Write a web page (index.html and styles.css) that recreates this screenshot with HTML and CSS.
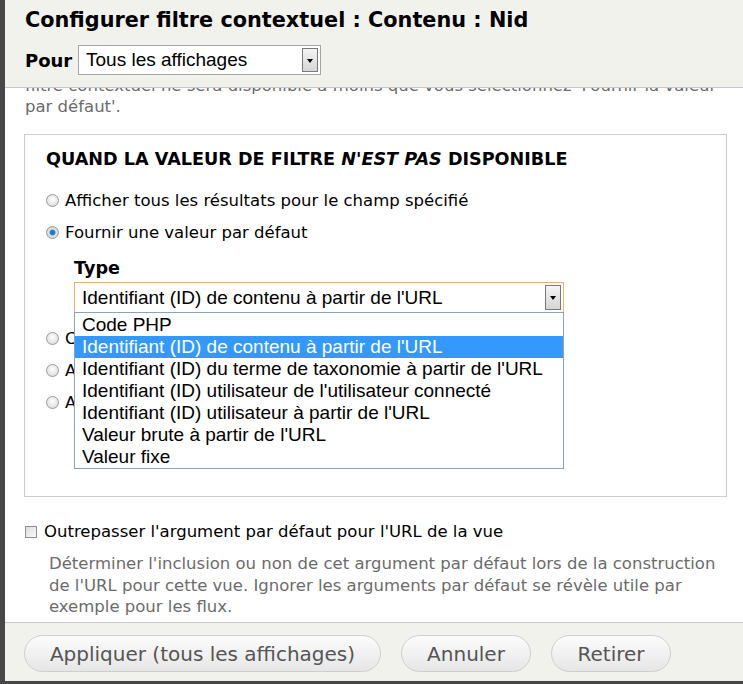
FILE: index.html
```html
<!DOCTYPE html>
<html lang="fr">
<head>
<meta charset="utf-8">
<title>Configurer filtre contextuel</title>
<link rel="stylesheet" href="styles.css">
</head>
<body>
<div class="dialog">
  <div class="header">
    <h1 class="title">Configurer filtre contextuel : Contenu : Nid</h1>
    <div class="for-row">
      <span class="for-label">Pour</span>
      <div class="select select-for"><span class="select-text">Tous les affichages</span><span class="arrow"></span></div>
    </div>
  </div>
  <div class="content">
    <div class="scroll">
      <p class="intro">filtre contextuel ne sera disponible à moins que vous sélectionnez 'Fournir la valeur par défaut'.</p>
      <fieldset class="box">
        <legend class="legend">Quand la valeur de filtre <em>n'est pas</em> disponible</legend>
        <div class="radio-row"><span class="radio"></span><span class="label">Afficher tous les résultats pour le champ spécifié</span></div>
        <div class="radio-row"><span class="radio checked"></span><span class="label">Fournir une valeur par défaut</span></div>
        <div class="type-block">
          <div class="type-label">Type</div>
          <div class="select select-type focus"><span class="select-text">Identifiant (ID) de contenu à partir de l'URL</span><span class="arrow"></span></div>
          <ul class="listbox">
            <li>Code PHP</li>
            <li class="sel">Identifiant (ID) de contenu à partir de l'URL</li>
            <li>Identifiant (ID) du terme de taxonomie à partir de l'URL</li>
            <li>Identifiant (ID) utilisateur de l'utilisateur connecté</li>
            <li>Identifiant (ID) utilisateur à partir de l'URL</li>
            <li>Valeur brute à partir de l'URL</li>
            <li>Valeur fixe</li>
          </ul>
        </div>
        <div class="radio-row"><span class="radio"></span><span class="label">Cacher la vue</span></div>
        <div class="radio-row"><span class="radio"></span><span class="label">Afficher un résumé</span></div>
        <div class="radio-row"><span class="radio"></span><span class="label">Afficher le contenu de « Aucun résultat trouvé »</span></div>
      </fieldset>
      <div class="check-row"><span class="checkbox"></span><span class="label">Outrepasser l'argument par défaut pour l'URL de la vue</span></div>
      <p class="desc">Déterminer l'inclusion ou non de cet argument par défaut lors de la construction de l'URL pour cette vue. Ignorer les arguments par défaut se révèle utile par exemple pour les flux.</p>
    </div>
  </div>
  <div class="footer">
    <button class="btn btn-apply" type="button">Appliquer (tous les affichages)</button>
    <button class="btn btn-cancel" type="button">Annuler</button>
    <button class="btn btn-remove" type="button">Retirer</button>
  </div>
</div>
</body>
</html>
```

FILE: styles.css
```css
html, body {
  margin: 0;
  padding: 0;
}
body {
  background: #474747;
  font-family: "DejaVu Sans", sans-serif;
  width: 743px;
  height: 684px;
  overflow: hidden;
}
.dialog {
  margin-left: 5px;
  height: 681px;
  background: #fff;
  display: flex;
  flex-direction: column;
  overflow: hidden;
}
.header {
  height: 87px;
  flex: none;
  background: #f2f2ed;
  border-bottom: 1px solid #c8c8c8;
  padding-left: 20px;
  position: relative;
  z-index: 2;
}
.title {
  margin: 0;
  padding-top: 6px;
  font-size: 20.8px;
  font-weight: bold;
  line-height: 28px;
  color: #000;
}
.for-row {
  display: flex;
  align-items: center;
  margin-top: 11px;
}
.for-label {
  font-weight: bold;
  font-size: 18px;
  color: #000;
  width: 53px;
}
.select {
  box-sizing: border-box;
  position: relative;
  background: #fff;
  border: 1px solid #a5a5a5;
  font-family: "Liberation Sans", Arial, sans-serif;
  font-size: 19px;
  color: #000;
  display: flex;
  align-items: center;
}
.select-for {
  width: 243px;
  height: 30px;
  padding-left: 7px;
}
.arrow {
  position: absolute;
  right: 2px;
  top: 2px;
  bottom: 2px;
  width: 16px;
  box-sizing: border-box;
  border: 1px solid #7a7a7a;
  background: linear-gradient(#f4f4f4, #d6d6d6);
}
.arrow::after {
  content: "";
  position: absolute;
  left: 4px;
  top: 10px;
  border-left: 3px solid transparent;
  border-right: 3px solid transparent;
  border-top: 4px solid #000;
}
.content {
  flex: 1;
  overflow: hidden;
  position: relative;
}
.scroll {
  margin-top: -13px;
  padding: 0 16px 0 20px;
}
.intro {
  margin: 0;
  color: #6b6b6b;
  font-size: 16.5px;
  line-height: 21px;
}
.box {
  margin: 17px 0 0 -1px;
  border: 1px solid #cdcdcd;
  padding: 0 0 20px 21px;
  position: relative;
  height: 363px;
  box-sizing: border-box;
}
.legend {
  float: left;
  width: 100%;
  padding: 12px 0 0 0;
  font-weight: bold;
  font-size: 17.6px;
  text-transform: uppercase;
  color: #000;
  line-height: 24px;
}
.legend em {
  font-style: italic;
}
.radio-row {
  clear: both;
  display: flex;
  align-items: center;
  height: 32px;
  font-size: 16.5px;
  color: #000;
}
.legend + .radio-row {
  padding-top: 13px;
}
.radio {
  width: 13px;
  height: 13px;
  border-radius: 50%;
  box-sizing: border-box;
  border: 1px solid #9a9a9a;
  background: radial-gradient(circle at 50% 40%, #ffffff, #d4d4d4);
  margin: 0 6px 0 0;
  flex: none;
}
.radio.checked {
  background: radial-gradient(circle, #1f6fc0 0, #2a84d6 2.5px, #e8e8e8 3.5px, #cfcfcf 6px);
}
.type-block {
  position: relative;
  padding: 8px 0 0 28px;
  height: 66px;
}
.type-label {
  font-weight: bold;
  font-size: 17.6px;
  color: #000;
  line-height: 24px;
}
.select-type {
  margin-top: 2px;
  width: 490px;
  height: 31px;
  padding-left: 7px;
  border-color: #e3b66a;
}
.listbox {
  position: absolute;
  left: 28px;
  top: 64px;
  width: 490px;
  box-sizing: border-box;
  margin: 0;
  padding: 1px 0 0;
  list-style: none;
  background: #fff;
  border: 1px solid #8ea3b7;
  font-family: "Liberation Sans", Arial, sans-serif;
  font-size: 19px;
  color: #000;
  z-index: 3;
}
.listbox li {
  height: 22px;
  line-height: 22px;
  padding-left: 7px;
  white-space: nowrap;
}
.listbox li.sel {
  background: #3399ff;
  color: #fff;
}
.check-row {
  display: flex;
  align-items: center;
  margin-top: 25px;
  font-size: 16.5px;
  color: #000;
}
.checkbox {
  width: 12px;
  height: 12px;
  box-sizing: border-box;
  border: 1px solid #8f8f8f;
  background: linear-gradient(135deg, #dcdcdc, #fafafa);
  margin-right: 7px;
  flex: none;
}
.desc {
  margin: 12px 0 0 24px;
  color: #6b6b6b;
  font-size: 16.5px;
  line-height: 21.5px;
}
.footer {
  flex: none;
  border-top: 1px solid #c8c8c8;
  background: #f2f2ed;
  display: flex;
  align-items: flex-start;
  padding: 12px 0 0 19px;
  box-sizing: border-box;
  height: 59px;
  gap: 20px;
}
.btn {
  height: 37px;
  border: 1px solid #cfcfcf;
  border-radius: 19px;
  background: linear-gradient(#fcfcfc, #e6e6e6);
  font-family: "DejaVu Sans", sans-serif;
  font-size: 20px;
  color: #555;
  padding: 0;
  box-sizing: border-box;
}
.btn-apply { width: 357px; }
.btn-cancel { width: 130px; }
.btn-remove { width: 120px; }
```
